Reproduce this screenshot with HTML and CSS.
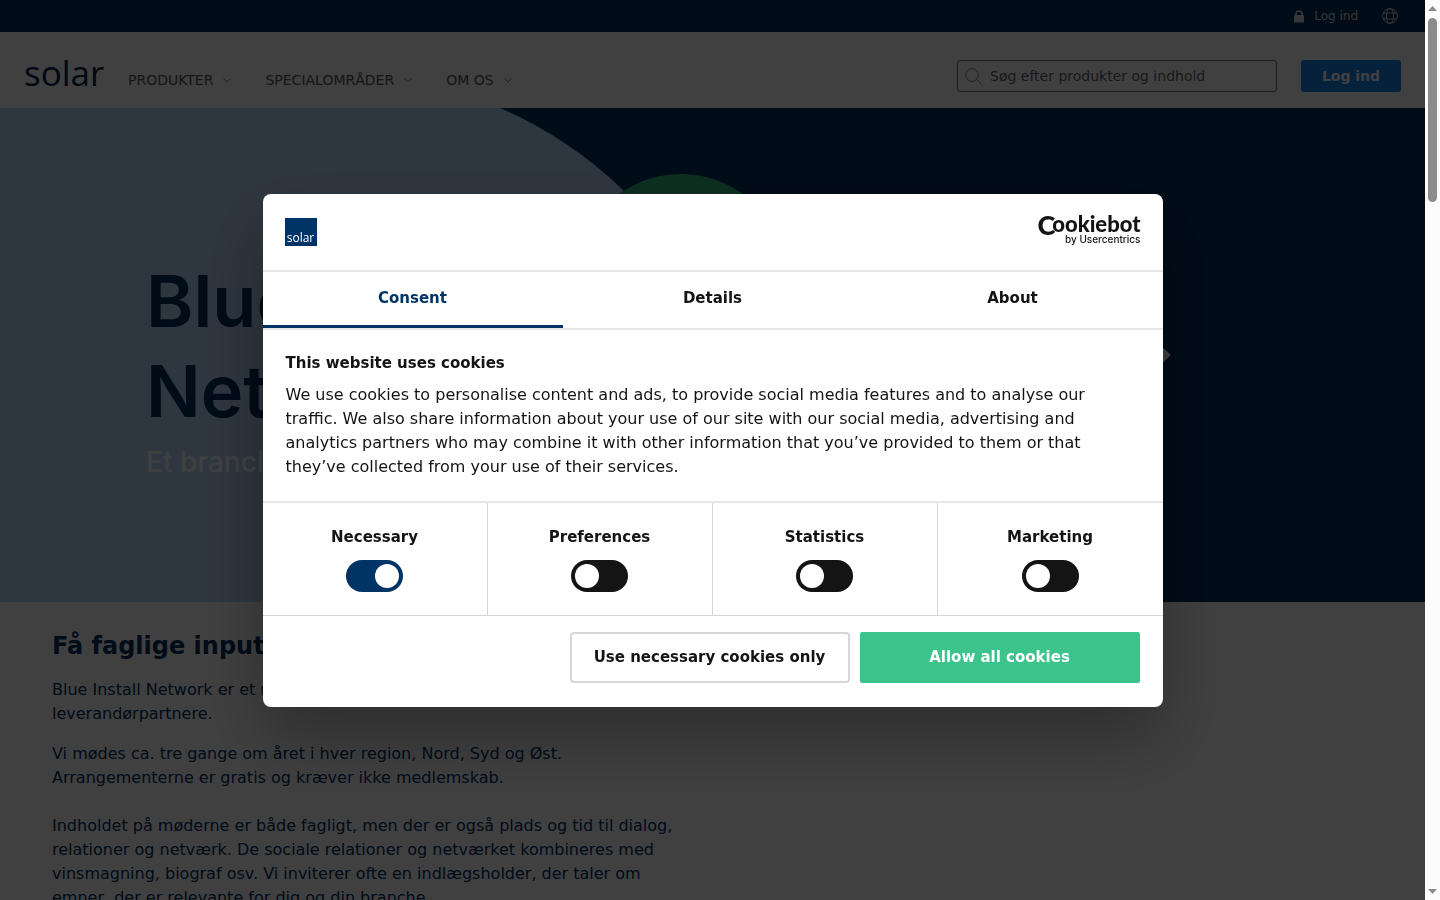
FILE: index.html
```html
<!DOCTYPE html>
<html lang="da">
<head>
    <meta charset="UTF-8">
    <meta name="viewport" content="width=device-width, initial-scale=1">
    <title>Blue Install Network - Solar</title>
    <link rel="stylesheet" href="styles.css">
</head>
<body>
    <div class="page">
        <div class="topbar">
            <a class="topbar-link" href="#login">
                <svg class="lock" width="10" height="13" viewBox="0 0 10 13"><path d="M2 5.500V4a3 3 0 0 1 6 0v1.500" fill="none" stroke="currentColor" stroke-width="1.600"/><rect y="5" width="10" height="7.500" rx="1.200" fill="currentColor"/></svg>
                Log ind
            </a>
            <a class="topbar-link" href="#language" aria-label="Language">
                <svg width="16" height="16" viewBox="0 0 16 16" fill="none" stroke="currentColor"><circle cx="8" cy="8" r="7.400"/><ellipse cx="8" cy="8" rx="3.600" ry="7.400"/><path d="M1.500 5h13M1.500 11h13"/></svg>
            </a>
        </div>

        <header class="header">
            <a class="logo" href="#home">solar</a>
            <nav class="nav">
                <a href="#produkter">PRODUKTER <svg width="8" height="5" viewBox="0 0 8 5"><path d="M.5.500 4 4 7.500.500"/></svg></a>
                <a href="#special">SPECIALOMRÅDER <svg width="8" height="5" viewBox="0 0 8 5"><path d="M.5.500 4 4 7.500.500"/></svg></a>
                <a href="#om">OM OS <svg width="8" height="5" viewBox="0 0 8 5"><path d="M.5.500 4 4 7.500.500"/></svg></a>
            </nav>
            <label class="search">
                <svg width="17" height="17" viewBox="0 0 17 17" fill="none" stroke="currentColor"><circle cx="7" cy="7" r="6.400"/><path d="m11.500 11.500 5 5"/></svg>
                <input type="search" placeholder="Søg efter produkter og indhold" aria-label="Søg">
            </label>
            <button class="login" type="button">Log ind</button>
        </header>

        <section class="hero">
            <svg class="hero-art" viewBox="0 0 1425 494" preserveAspectRatio="xMinYMin slice">
                <path d="M0 0H500A407 407 0 0 1 728 494H0z" fill="#b9d6fa"/>
                <circle cx="681" cy="172" r="106" fill="#30b87c"/>
                <path d="M1120 200l51 47-51 47z" fill="#fff"/>
            </svg>
            <div class="hero-text">
                <h1>Blue Install<br>Network</h1>
                <p>Et branchenetværk</p>
            </div>
        </section>

        <main class="content">
            <h2>Få faglige input</h2>
            <p>Blue Install Network er et netværk for installatører og vores mange leverandørpartnere.</p>
            <p>Vi mødes ca. tre gange om året i hver region, Nord, Syd og Øst. Arrangementerne er gratis og kræver ikke medlemskab.</p>
            <p class="spaced">Indholdet på møderne er både fagligt, men der er også plads og tid til dialog, relationer og netværk. De sociale relationer og netværket kombineres med vinsmagning, biograf osv. Vi inviterer ofte en indlægsholder, der taler om emner, der er relevante for dig og din branche.</p>
        </main>
    </div>

    <div class="scrollbar" aria-hidden="true">
        <svg width="9" height="5" viewBox="0 0 9 5"><path d="M0 5 4.500 0 9 5z"/></svg>
        <div class="track"><div class="thumb"></div></div>
        <svg width="9" height="5" viewBox="0 0 9 5"><path d="M0 0 4.500 5 9 0z"/></svg>
    </div>

    <div class="overlay">
        <div class="dialog" role="dialog" aria-labelledby="cookie-title">
            <div class="dialog-head">
                <div class="badge">solar</div>
                <a class="cookiebot" href="#cookiebot">
                    <span class="cb-name"><span class="cb-c">C</span>ookiebot</span>
                    <span class="cb-by">by Usercentrics</span>
                </a>
            </div>
            <div class="tabs" role="tablist">
                <button class="tab active" type="button" role="tab" aria-selected="true">Consent</button>
                <button class="tab" type="button" role="tab">Details</button>
                <button class="tab" type="button" role="tab">About</button>
            </div>
            <div class="dialog-body">
                <h2 id="cookie-title">This website uses cookies</h2>
                <p>We use cookies to personalise content and ads, to provide social media features and to analyse our traffic. We also share information about your use of our site with our social media, advertising and analytics partners who may combine it with other information that you’ve provided to them or that they’ve collected from your use of their services.</p>
            </div>
            <div class="choices">
                <label class="choice">Necessary <input type="checkbox" checked></label>
                <label class="choice">Preferences <input type="checkbox"></label>
                <label class="choice">Statistics <input type="checkbox"></label>
                <label class="choice">Marketing <input type="checkbox"></label>
            </div>
            <div class="dialog-foot">
                <button class="btn" type="button">Use necessary cookies only</button>
                <button class="btn btn-allow" type="button">Allow all cookies</button>
            </div>
        </div>
    </div>
</body>
</html>
```
FILE: styles.css
```css
* {
    box-sizing: border-box;
}
body {
    margin: 0;
    display: flex;
    height: 100vh;
    overflow: hidden;
    font-family: "DejaVu Sans", sans-serif;
    font-size: 16px;
    line-height: 24px;
    color: #003062;
    background: #fff;
}
h1, h2, p {
    margin: 0;
}
a {
    color: inherit;
    text-decoration: none;
}
button, input {
    font: inherit;
    color: inherit;
}
.page {
    flex: 1;
    min-width: 0;
    overflow: hidden;
}

/* top */
.topbar {
    display: flex;
    justify-content: flex-end;
    align-items: center;
    gap: 24px;
    height: 32px;
    padding: 0 27px;
    background: #003062;
    color: #d8d8d8;
    font-size: 12px;
}
.topbar-link {
    display: flex;
    align-items: center;
    gap: 10px;
}
.header {
    display: flex;
    align-items: center;
    height: 76px;
    padding: 12px 24px 0;
    font-size: 14px;
}
.logo {
    width: 104px;
    padding-bottom: 6px;
    font: 500 35px/40px "Open Sans", sans-serif;
    color: #002050;
}
.nav {
    display: flex;
    gap: 34px;
    flex: 1;
    padding-top: 8px;
    color: #555;
}
.nav a {
    display: flex;
    align-items: center;
    gap: 10px;
}
.nav svg {
    fill: none;
    stroke: #777;
}
.search {
    display: flex;
    align-items: center;
    gap: 8px;
    width: 320px;
    height: 32px;
    padding: 0 7px;
    border: 1px solid #777;
    border-radius: 3px;
    color: #888;
}
.search input {
    flex: 1;
    min-width: 0;
    padding: 0;
    border: 0;
    outline: 0;
    background: none;
}
.search input::placeholder {
    color: #666;
    opacity: 1;
}
.login {
    width: 100px;
    height: 32px;
    margin-left: 24px;
    border: 0;
    border-radius: 3px;
    background: #1483f0;
    color: #fff;
    font-weight: bold;
}

/* hero */
.hero {
    display: grid;
    height: 494px;
    background: #003062;
}
.hero-art,
.hero-text {
    grid-area: 1 / 1;
}
.hero-art {
    width: 100%;
    height: 494px;
}
.hero-text {
    padding: 148px 146px 0;
    font-family: Inter, sans-serif;
}
.hero-text h1 {
    font-size: 72px;
    line-height: 90px;
    font-weight: 600;
}
.hero-text p {
    padding-top: 8px;
    font-size: 28px;
    line-height: 36px;
    font-weight: 500;
    color: #fff;
}

.content {
    max-width: 739px;
    padding: 28px 52px;
}
.content h2 {
    margin-bottom: 16px;
    font-size: 24px;
    line-height: 32px;
}
.content p {
    margin-bottom: 16px;
}
.content .spaced {
    margin-top: 24px;
}

.scrollbar {
    display: flex;
    flex-direction: column;
    align-items: center;
    width: 15px;
    padding: 6px 0;
    background: #fcfcfc;
}
.scrollbar svg {
    fill: #8b8b8b;
}
.track {
    flex: 1;
    padding-top: 7px;
}
.thumb {
    width: 9px;
    height: 184px;
    border-radius: 5px;
    background: #8b8b8b;
}

/* cookie dialog */
.overlay {
    position: fixed;
    inset: 0 15px 0 0;
    display: grid;
    place-items: center;
    background: rgba(0, 0, 0, .75);
}
.dialog {
    width: 900px;
    max-width: 95%;
    border-radius: 8px;
    background: #fff;
    color: #141414;
    font-size: 15px;
    box-shadow: 0 32px 68px rgba(0, 0, 0, .3);
}
.dialog-head {
    display: flex;
    justify-content: space-between;
    align-items: center;
    height: 78px;
    padding: 0 22px;
    border-bottom: 2px solid #e6e6e6;
}
.badge {
    width: 32px;
    height: 28px;
    padding-top: 12px;
    background: #003366;
    color: #fff;
    font: 12px/15px "Open Sans", sans-serif;
    text-align: center;
}
.cookiebot {
    display: flex;
    flex-direction: column;
    align-items: flex-end;
    padding-bottom: 4px;
    font-family: Inter, sans-serif;
}
.cb-name {
    font: 900 22px/18px Lato, sans-serif;
}
.cb-c {
    margin-right: -3px;
    font-size: 27px;
    line-height: 16px;
    vertical-align: -3px;
}
.cb-by {
    font-size: 10px;
    line-height: 12px;
    font-weight: 500;
}
.tabs {
    display: grid;
    grid-template-columns: repeat(3, 1fr);
    border-bottom: 2px solid #e6e6e6;
}
.tab {
    height: 56px;
    padding: 0;
    border: 0;
    border-bottom: 3px solid transparent;
    background: none;
    font-weight: bold;
}
.tab.active {
    border-color: #003366;
    color: #003366;
}
.dialog-body {
    padding: 21px 64px 22px 23px;
}
.dialog-body h2 {
    margin-bottom: 8px;
    font-size: 15px;
    line-height: 24px;
}
.dialog-body p {
    font-size: 16px;
}
.choices {
    display: grid;
    grid-template-columns: repeat(4, 1fr);
    border-top: 2px solid #e6e6e6;
    border-bottom: 1px solid #d6d6d6;
}
.choice {
    display: flex;
    flex-direction: column;
    align-items: center;
    gap: 11px;
    padding: 22px 0 23px;
    border-right: 1px solid #d6d6d6;
    font-weight: bold;
}
.choice:last-child {
    border-right: 0;
}
.choice input {
    appearance: none;
    width: 57px;
    height: 32px;
    margin: 0;
    padding: 4px;
    border-radius: 16px;
    background: #141414;
}
.choice input::before {
    content: "";
    display: block;
    width: 24px;
    height: 24px;
    border-radius: 50%;
    background: #fff;
}
.choice input:checked {
    background: #003366;
}
.choice input:checked::before {
    margin-left: auto;
}
.dialog-foot {
    display: flex;
    justify-content: flex-end;
    gap: 10px;
    padding: 16px 23px 24px;
}
.btn {
    width: 280px;
    height: 51px;
    padding: 0;
    border: 2px solid #d6d6d6;
    border-radius: 4px;
    background: #fff;
    font-weight: bold;
}
.btn-allow {
    border-color: #3cc48c;
    border-radius: 2px;
    background: #3cc48c;
    color: #fff;
}
```
